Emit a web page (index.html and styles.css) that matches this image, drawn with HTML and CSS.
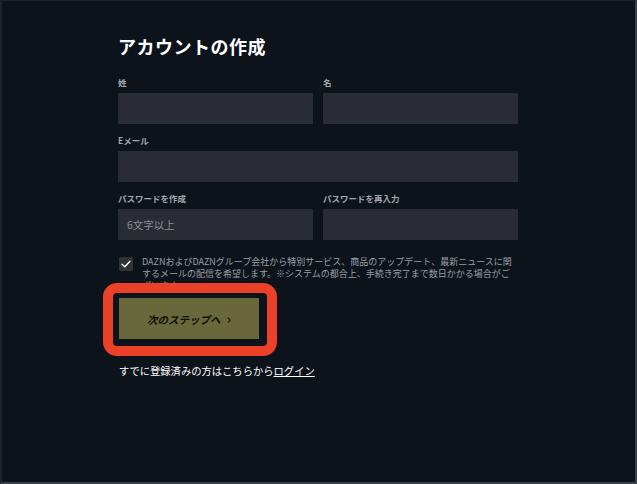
FILE: index.html
```html
<!DOCTYPE html>
<html lang="ja">

<head>
    <meta charset="UTF-8">
    <meta name="viewport" content="width=device-width, initial-scale=1.0">
    <title>アカウントの作成</title>
    <link rel="stylesheet" href="styles.css">
</head>

<body>
    <div class="frame">
        <div class="signup">
            <!--titre-->
            <h1 class="signup-title">アカウントの作成</h1>

            <form class="signup-form">
                <div class="row">
                    <div class="field">
                        <label>姓</label>
                        <input type="text">
                    </div>
                    <div class="field">
                        <label>名</label>
                        <input type="text">
                    </div>
                </div>
                <div class="row">
                    <div class="field">
                        <label>Eメール</label>
                        <input type="email">
                    </div>
                </div>
                <div class="row">
                    <div class="field">
                        <label>パスワードを作成</label>
                        <input type="password" placeholder="6文字以上">
                    </div>
                    <div class="field">
                        <label>パスワードを再入力</label>
                        <input type="password">
                    </div>
                </div>

                <!--case a cocher newsletter-->
                <div class="optin">
                    <span class="check">
                        <svg width="10" height="8" viewBox="0 0 10 8">
                            <path d="M1 4.2 L3.8 6.8 L9 1.2" fill="none" stroke="#fff" stroke-width="1.4"
                                stroke-linecap="round" stroke-linejoin="round" />
                        </svg>
                    </span>
                    <p>DAZNおよびDAZNグループ会社から特別サービス、商品のアップデート、最新ニュースに関するメールの配信を希望します。※システムの都合上、手続き完了まで数日かかる場合がございます。</p>
                </div>

                <div class="next-wrap">
                    <button type="button" class="next-btn">次のステップへ <span class="chev">›</span></button>
                    <!--encadre rouge-->
                    <div class="highlight"></div>
                </div>
            </form>

            <p class="login-line">すでに登録済みの方はこちらから<a href="#">ログイン</a></p>
        </div>
    </div>
</body>

</html>
```

FILE: styles.css
```css
body {
    margin: 0;
    padding: 0;
    background-color: #0d131b;
    font-family: "Noto Sans CJK JP", "Noto Sans", sans-serif;
}

.frame {
    box-sizing: border-box;
    width: 637px;
    height: 484px;
    overflow: hidden;
    border-left: 2px solid #1b232c;
    border-top: 1px solid #1b232c;
    border-right: 2px solid #3a4149;
    border-bottom: 2px solid #3a4149;
    background-color: #0d131b;
}

.signup {
    width: 400px;
    margin-left: 116px;
}

.signup-title {
    color: white;
    font-size: 18px;
    line-height: 24px;
    font-weight: bold;
    margin: 33px 0 18px;
    letter-spacing: 0.5px;
}

.row {
    display: flex;
    gap: 10px;
    margin-bottom: 10px;
}

.field {
    flex: 1;
    display: flex;
    flex-direction: column;
}

.field label {
    color: #a3a7ad;
    font-size: 8.5px;
    line-height: 12px;
    font-weight: bold;
    margin-bottom: 5px;
}

.field input {
    box-sizing: border-box;
    height: 31px;
    border: none;
    background-color: #292c33;
    padding: 0 9px;
    font-family: inherit;
    font-size: 10.5px;
    color: white;
    outline: none;
}

.field input::placeholder {
    color: #8d9096;
}

.optin {
    display: flex;
    align-items: flex-start;
    margin-top: 16px;
}

.check {
    width: 14px;
    height: 14px;
    flex-shrink: 0;
    background-color: #30333a;
    border-radius: 1px;
    display: flex;
    align-items: center;
    justify-content: center;
    margin: 1px 9px 0 1px;
}

.optin p {
    margin: 0;
    width: 374px;
    color: #9b9fa5;
    font-size: 9px;
    line-height: 12px;
}

.next-wrap {
    position: relative;
    width: 140px;
    margin: 6px 0 0 1px;
}

.next-btn {
    display: block;
    width: 140px;
    height: 41px;
    border: none;
    background-color: #68683a;
    color: #0f0f0a;
    font-family: inherit;
    font-size: 10.5px;
    font-weight: bold;
    font-style: italic;
    cursor: pointer;
}

.chev {
    font-style: normal;
    font-size: 13px;
    margin-left: 4px;
}

.highlight {
    position: absolute;
    left: -16px;
    top: -15px;
    right: -18px;
    bottom: -17px;
    border: 10px solid #ec4129;
    border-radius: 14px;
    pointer-events: none;
}

.login-line {
    color: white;
    font-size: 10.3px;
    line-height: 14px;
    margin: 25px 0 0 1px;
}

.login-line a {
    color: white;
    text-decoration: underline;
}
```
